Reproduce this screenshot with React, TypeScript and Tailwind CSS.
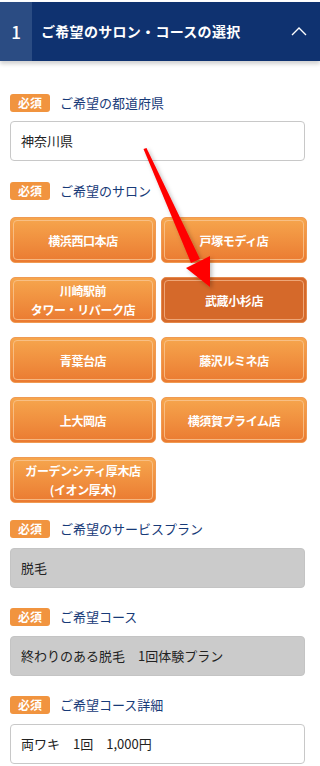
import React from "react";

const stores = [
  { name: "横浜西口本店" },
  { name: "戸塚モディ店" },
  { name: "川崎駅前\nタワー・リバーク店" },
  { name: "武蔵小杉店", selected: true },
  { name: "青葉台店" },
  { name: "藤沢ルミネ店" },
  { name: "上大岡店" },
  { name: "横須賀プライム店" },
  { name: "ガーデンシティ厚木店\n(イオン厚木)" },
];

const Label: React.FC<{ text: string; className?: string }> = ({ text, className }) => (
  <div className={"flex items-center h-[18px] " + (className ?? "")}>
    <span className="w-[40px] h-[18px] rounded-[3px] bg-[#f1943f] text-white text-[12px] font-bold leading-[18px] text-center">
      必須
    </span>
    <span className="ml-[10px] text-[13px] text-[#173a78] leading-[18px]">{text}</span>
  </div>
);

const Field: React.FC<{ value: string; grey?: boolean; className?: string }> = ({
  value,
  grey,
  className,
}) => (
  <div
    className={
      "h-[40px] rounded-[4px] border flex items-center pl-[10px] text-[13px] text-[#222] " +
      (grey ? "bg-[#cbcbcb] border-[#c4c4c4] " : "bg-white border-[#c8c8c8] ") +
      (className ?? "")
    }
  >
    {value}
  </div>
);

const StoreButton: React.FC<{ name: string; selected?: boolean }> = ({ name, selected }) => (
  <div
    className={
      "h-[46px] rounded-[5px] p-[2px] " +
      (selected
        ? "bg-[#d5692a] border border-[#e4884a]"
        : "bg-gradient-to-b from-[#f6a64d] to-[#ea7a31] border border-[#f09a52]")
    }
  >
    <div
      className={
        "h-full rounded-[4px] border flex items-center justify-center text-center whitespace-pre-line text-white text-[12px] font-bold leading-[19px] tracking-[-0.4px] " +
        (selected ? "border-[#eea677]" : "border-[#f9c592]/80")
      }
    >
      {name}
    </div>
  </div>
);

export default function App() {
  return (
    <div
      className="relative w-[320px] h-[766px] bg-white overflow-hidden"
      style={{ fontFamily: '"Noto Sans CJK JP", "Noto Sans", sans-serif' }}
    >
      <div className="mt-[2px] h-[59px] flex bg-[#0f3270] text-white shadow-[0_3px_4px_rgba(0,0,0,0.18)]">
        <div className="w-[32px] bg-[#2b4c83] flex items-center justify-center text-[17px] font-medium">1</div>
        <div className="flex-1 flex items-center pl-[9px] text-[14px] font-bold tracking-[0.3px]">
          ご希望のサロン・コースの選択
        </div>
        <div className="w-[40px] flex items-center justify-center pr-[2px]">
          <svg width="16" height="9" viewBox="0 0 16 9" fill="none">
            <path d="M1 8 L8 1 L15 8" stroke="white" strokeWidth="1.4" />
          </svg>
        </div>
      </div>

      <div className="pl-[10px] pr-[15px]">
        <Label text="ご希望の都道府県" className="mt-[33px]" />
        <Field value="神奈川県" className="mt-[9px]" />

        <Label text="ご希望のサロン" className="mt-[21px]" />
        <div className="mt-[17px] w-[297px] grid grid-cols-2 gap-x-[5px] gap-y-[14px]">
          {stores.map((s) => (
            <StoreButton key={s.name} name={s.name} selected={s.selected} />
          ))}
        </div>

        <Label text="ご希望のサービスプラン" className="mt-[17px]" />
        <Field value="脱毛" grey className="mt-[10px]" />

        <Label text="ご希望コース" className="mt-[20px]" />
        <Field value="終わりのある脱毛　1回体験プラン" grey className="mt-[10px]" />

        <Label text="ご希望コース詳細" className="mt-[20px]" />
        <Field value="両ワキ　1回　1,000円" className="mt-[10px]" />
      </div>

      <svg
        className="absolute left-0 top-0 pointer-events-none"
        width="320"
        height="766"
        viewBox="0 0 320 766"
      >
        <defs>
          <filter id="arrowShadow" x="-20%" y="-20%" width="140%" height="140%">
            <feDropShadow dx="2" dy="2" stdDeviation="2" floodColor="#000" floodOpacity="0.25" />
          </filter>
        </defs>
        <g filter="url(#arrowShadow)">
          <path d="M143.5 149 L146.5 148 L200 259 L191 263 Z" fill="#ff0000" />
          <path d="M186 268 L210 256 L210 287 Z" fill="#ff0000" />
        </g>
      </svg>
    </div>
  );
}
